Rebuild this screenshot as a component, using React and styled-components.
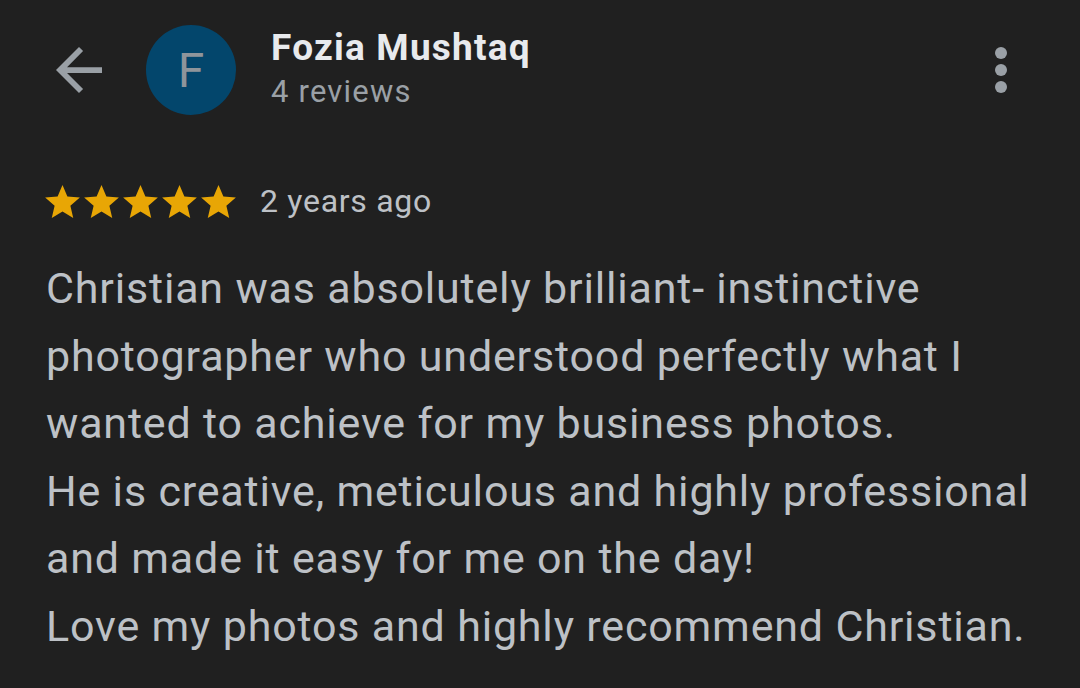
import styled, { createGlobalStyle } from "styled-components";

const Global = createGlobalStyle`
  html, body {
    margin: 0;
    padding: 0;
    background: #202020;
  }
  body {
    font-family: Roboto, "Noto Sans", sans-serif;
  }
`;

const Page = styled.div`
  width: 1080px;
  height: 688px;
  background: #202020;
  overflow: hidden;
`;

const Header = styled.div`
  display: flex;
  align-items: center;
  height: 90px;
  padding: 25px 0 0 56px;
`;

const BackButton = styled.div`
  width: 46px;
  height: 46px;
  display: flex;
  align-items: center;
  color: #9aa0a6;
`;

const Avatar = styled.div`
  width: 90px;
  height: 90px;
  border-radius: 50%;
  background: #03466c;
  color: #8f959b;
  display: flex;
  align-items: center;
  justify-content: center;
  font-size: 48px;
  margin-left: 44px;
`;

const Who = styled.div`
  display: flex;
  flex-direction: column;
  align-self: flex-start;
  margin: 1px 0 0 35px;
  flex: 1;
`;

const Name = styled.div`
  color: #e8eaed;
  font-size: 37px;
  font-weight: 700;
  letter-spacing: 1.2px;
  line-height: 44px;
`;

const Count = styled.div`
  color: #9aa0a6;
  font-size: 31px;
  letter-spacing: 1.2px;
  line-height: 44px;
`;

const MenuButton = styled.div`
  display: flex;
  flex-direction: column;
  gap: 5px;
  margin-right: 73px;
`;

const Dot = styled.span`
  width: 12px;
  height: 12px;
  border-radius: 50%;
  background: #9aa0a6;
`;

const Meta = styled.div`
  display: flex;
  align-items: center;
  gap: 24px;
  padding: 69px 0 0 45px;
`;

const Stars = styled.div`
  display: flex;
  gap: 4px;
`;

const When = styled.span`
  color: #bdc1c6;
  font-size: 32px;
  letter-spacing: 0.7px;
  line-height: 34px;
`;

const Body = styled.p`
  margin: 37px 0 0 46px;
  color: #bdc1c6;
  font-size: 43px;
  letter-spacing: 0.82px;
  line-height: 67.6px;
  white-space: pre-line;
`;

const Star = () => (
  <svg width="35" height="33" viewBox="2 2 20 19">
    <path
      fill="#e8a605"
      d="M12 17.27L18.18 21l-1.64-7.03L22 9.24l-7.19-.61L12 2 9.19 8.63 2 9.24l5.46 4.73L5.82 21z"
    />
  </svg>
);

const review = `Christian was absolutely brilliant- instinctive
photographer who understood perfectly what I
wanted to achieve for my business photos.
He is creative, meticulous and highly professional
and made it easy for me on the day!
Love my photos and highly recommend Christian.`;

export default function App() {
  return (
    <Page>
      <Global />
      <Header>
        <BackButton>
          <svg width="46" height="46" viewBox="4 4 16 16">
            <path
              fill="currentColor"
              d="M20 11H7.83l5.59-5.59L12 4l-8 8 8 8 1.41-1.41L7.83 13H20v-2z"
            />
          </svg>
        </BackButton>
        <Avatar>F</Avatar>
        <Who>
          <Name>Fozia Mushtaq</Name>
          <Count>4 reviews</Count>
        </Who>
        <MenuButton>
          <Dot />
          <Dot />
          <Dot />
        </MenuButton>
      </Header>
      <Meta>
        <Stars>
          {[0, 1, 2, 3, 4].map((i) => (
            <Star key={i} />
          ))}
        </Stars>
        <When>2 years ago</When>
      </Meta>
      <Body>{review}</Body>
    </Page>
  );
}
